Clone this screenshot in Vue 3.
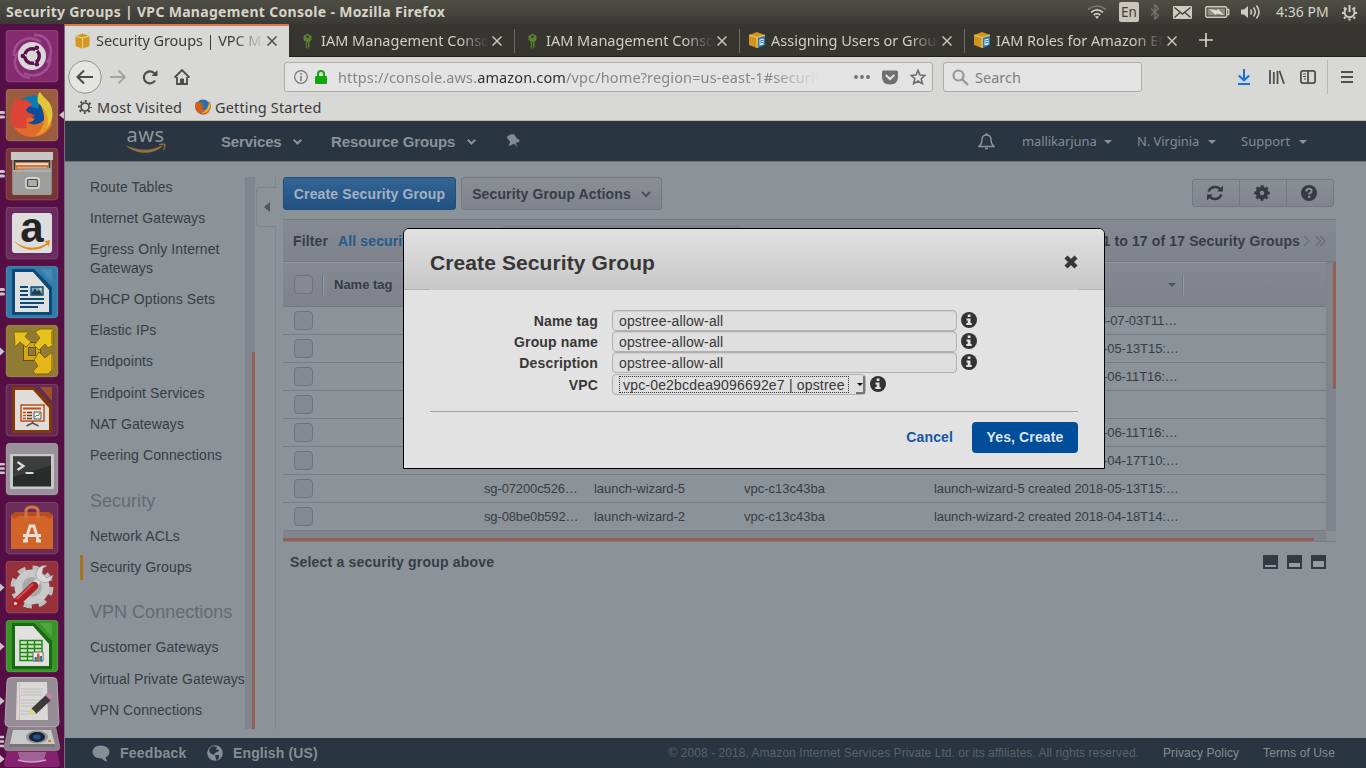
<script setup>
const tabs = [
  { title: 'Security Groups | VPC Management', icon: 'cube', active: true },
  { title: 'IAM Management Console', icon: 'key' },
  { title: 'IAM Management Console', icon: 'key' },
  { title: 'Assigning Users or Groups', icon: 'doc' },
  { title: 'IAM Roles for Amazon EC2', icon: 'doc' },
]
const launcher = [
  { name: 'dash' },
  { name: 'firefox', pips: 2, focus: true },
  { name: 'files', pips: 2 },
  { name: 'amazon' },
  { name: 'writer', pips: 2 },
  { name: 'vmware', pips: 1 },
  { name: 'impress' },
  { name: 'terminal', pips: 3 },
  { name: 'software' },
  { name: 'settings', pips: 1 },
  { name: 'calc', pips: 1 },
]
const nav = [
  { t: 'Route Tables' },
  { t: 'Internet Gateways' },
  { t: 'Egress Only Internet Gateways' },
  { t: 'DHCP Options Sets' },
  { t: 'Elastic IPs' },
  { t: 'Endpoints' },
  { t: 'Endpoint Services' },
  { t: 'NAT Gateways' },
  { t: 'Peering Connections' },
  { t: 'Security', head: true },
  { t: 'Network ACLs' },
  { t: 'Security Groups', current: true },
  { t: 'VPN Connections', head: true },
  { t: 'Customer Gateways' },
  { t: 'Virtual Private Gateways' },
  { t: 'VPN Connections' },
]
const rows = [
  { desc: 'launch_wizard-8 created 2018-07-03T11…' },
  { desc: 'launch-wizard-6 created 2018-05-13T15:…' },
  { desc: 'launch-wizard-7 created 2018-06-11T16:…' },
  {},
  { desc: 'launch-wizard-9 created 2018-06-11T16:…' },
  { desc: 'launch-wizard-1 created 2018-04-17T10:…' },
  { id: 'sg-07200c526…', name: 'launch-wizard-5', vpc: 'vpc-c13c43ba', desc: 'launch-wizard-5 created 2018-05-13T15:…' },
  { id: 'sg-08be0b592…', name: 'launch-wizard-2', vpc: 'vpc-c13c43ba', desc: 'launch-wizard-2 created 2018-04-18T14:…' },
]
const fields = ['Name tag', 'Group name', 'Description']
</script>

<template>
  <div class="screen">
    <header class="topbar">
      <span class="wtitle">Security Groups | VPC Management Console - Mozilla Firefox</span>
      <div class="tray">
        <svg class="t-wifi" width="20" height="16" viewBox="0 0 20 16" fill="none" stroke-linecap="butt">
          <path d="M1 5.5Q10-1.5 19 5.5" stroke="#7b7a70" stroke-width="1.7" /><path d="M4 8.3Q10 3.4 16 8.3" stroke="#d0cdc2" stroke-width="1.7" /><path d="M6.7 11Q10 8.2 13.3 11" stroke="#d0cdc2" stroke-width="1.7" /><path d="M8 12.6Q10 11.4 12 12.6L10 15z" fill="#d0cdc2" />
        </svg>
        <span class="lang">En</span>
        <svg class="t-bt" width="10" height="16" viewBox="0 0 10 16" fill="none" stroke="#77766d" stroke-width="1.3"><path d="M1 4.5l7.5 7L5 15V1l3.5 3.5L1 11.5" /></svg>
        <svg class="t-mail" width="19" height="13" viewBox="0 0 19 13"><rect width="19" height="13" rx="1" fill="#cfccc2" /><path d="M1.5 1.5l8 6.5 8-6.5M1.5 11.5l5.5-5M17.500 11.500l-5.500-5" stroke="#45443d" stroke-width="1.4" fill="none" /></svg>
        <svg class="t-bat" width="25" height="14" viewBox="0 0 25 14"><rect x=".7" y="1.700" width="21" height="10.600" rx="1.500" fill="none" stroke="#cfccc2" stroke-width="1.400" /><path d="M22 4.500h1.800v5H22" fill="none" stroke="#cfccc2" stroke-width="1.300" /><rect x="2.500" y="3.500" width="17.500" height="7" fill="#8f8d83" /><path d="M4 4l8 1.500 1-1.500 6 6-7-1.500-1.500 1.500z" fill="#dedbd0" /></svg>
        <svg class="t-vol" width="20" height="16" viewBox="0 0 20 16" fill="none" stroke="#cfccc2" stroke-width="1.600"><path d="M0 5.500h3L7 2v12L3 10.500H0z" fill="#cfccc2" stroke="none" /><path d="M9.500 5.500q2 2.500 0 5M12.500 3.500q3.500 4.500 0 9M15.500 1.500q5 6.500 0 13" /></svg>
        <span class="clock">4:36 PM</span>
        <svg class="t-cog" width="17" height="17" viewBox="0 0 17 17" fill="none" stroke="#cfccc2"><path d="M5.500 4.300a5 5 0 1 0 6 0" stroke-width="2" /><path d="M8.500 1v7" stroke-width="2" /><path d="M1 9h2M14 9h2M3 3.500l1.500 1.500M14 3.500L12.500 5M3 14.500L4.500 13M14 14.500L12.500 13M8.500 14.500v2" stroke-width="2.200" /></svg>
      </div>
    </header>

    <div class="desk">
      <aside class="launcher">
        <div v-for="l in launcher" :key="l.name" class="slot">
          <svg width="65" height="59" viewBox="0 0 65 59">
            <template v-if="l.pips === 1"><path d="M0 22.500l4.500 4L0 30.500z" fill="#c9c3c8" /></template>
            <template v-if="l.pips === 2"><rect x="-2" y="22" width="7" height="3" rx="1.500" fill="#c9c3c8" /><rect x="-2" y="26.500" width="7" height="3" rx="1.500" fill="#c9c3c8" /></template>
            <template v-if="l.pips === 3"><rect x="-2" y="20" width="7" height="2.600" rx="1.300" fill="#c9c3c8" /><rect x="-2" y="24.200" width="7" height="2.600" rx="1.300" fill="#c9c3c8" /><rect x="-2" y="28.500" width="7" height="2.600" rx="1.300" fill="#c9c3c8" /></template>
            <path v-if="l.focus" d="M64.500 21.500l-5.500 4.500 5.500 4.500z" fill="#c9c3c8" />
            <g transform="translate(6 0)">
              <g v-if="l.name === 'dash'">
                <rect class="tile" width="52" height="52" rx="4" fill="#862b70" />
                <path d="M8 26C7 12 22 3 35 12M44 26c2 14-12 24-26 17M28 5c14-1 22 14 13 28M24 48C10 46 4 32 14 20" stroke="#ad6ba0" stroke-width="2.500" fill="none" opacity=".6" />
                <circle cx="26" cy="26" r="14" fill="#dad7da" /><circle cx="26" cy="26" r="7.300" fill="none" stroke="#5b1049" stroke-width="3.400" stroke-dasharray="13.300 2" stroke-dashoffset="6" />
                <circle cx="16.800" cy="26" r="2.300" fill="#5b1049" /><circle cx="30.800" cy="17.800" r="2.300" fill="#5b1049" /><circle cx="30.800" cy="34.200" r="2.300" fill="#5b1049" />
              </g>
              <g v-else-if="l.name === 'firefox'">
                <rect class="tile" width="52" height="52" rx="4" fill="#9b5d3f" />
                <circle cx="27" cy="24" r="17" fill="#0b4c9c" /><path d="M16 12q8-9 19-4l-3 12-12-4z" fill="#0a7cb4" />
                <path d="M10 8c1 4 3 4 6 3 4-1 6 1 10 4-1 3-5 3-6 6 2 4 6 3 9 6-2 2-5 1-9 4 4 6 14 6 20-1l6 6c-4 8-11 12-20 12C11 48 2 36 5 22c1-5 3-8 5-14z" fill="#dd4438" />
                <path d="M20 30c3-2 6-2 9 0-2 2-4 4-8 3 4 5 13 3 19-4l6 7c-4 8-11 12-20 12-8 0-14-4-18-10 4 1 8 2 13 1z" fill="#dd6b2c" />
                <path d="M34 15c-2-5-2-9 0-12 2 5 8 7 11 14 5 17-4 28-16 30 8-6 13-17 5-32z" fill="#e49b26" />
                <path d="M32 14c-1-5 0-9 2-11 2 5 8 7 11 14 3 9 1 16-4 22 3-11-1-19-9-25z" fill="#e2c73c" />
              </g>
              <g v-else-if="l.name === 'files'">
                <rect class="tile" width="52" height="52" rx="4" fill="#783436" />
                <path d="M6 5h40v41H6z" fill="#8b8b8a" /><path d="M5 4h42v8H5z" fill="#c6c6c4" /><path d="M8 12h36v12H8z" fill="#3a3332" /><path d="M9 14h34v8H9z" fill="#c97a42" /><path d="M10 15h32v2H10z" fill="#e3d6c8" /><path d="M11 19h30v1.500H11z" fill="#e0a27a" /><path d="M7 22h11l3-2h24v27H7z" fill="#9d9d9b" /><path d="M7 23h38" stroke="#bebebc" />
                <rect x="20.500" y="30.500" width="12" height="9" rx="2" fill="none" stroke="#d2d2d0" stroke-width="3" /><rect x="21.500" y="31.500" width="10" height="7" rx="1" fill="#aeaeac" stroke="#4a4a49" stroke-width="1.200" />
              </g>
              <g v-else-if="l.name === 'amazon'">
                <rect class="tile" width="52" height="52" rx="4" fill="#6b2c5f" /><rect x="6" y="6" width="40" height="40" rx="3" fill="#dedede" />
                <text x="26" y="34.500" text-anchor="middle" class="amz">a</text>
                <path d="M8 34c11 9 24 8 33 2l-3-1.500 6-1.500-1 6.500-1.500-2C31 46 16 44 8 34z" fill="#e08c15" />
              </g>
              <g v-else-if="l.name === 'writer'">
                <rect class="tile" width="52" height="52" rx="4" fill="#337ba8" /><path d="M6 3h22l18 18v28H6z" fill="#0a4a78" /><path d="M34 3h12v14z" fill="#4389b0" /><path d="M9 6h18l16 18v22H9z" fill="#e0e0e0" />
                <path d="M14 21h8M14 25h8M14 29h8M14 33h24M14 37h24M14 41h18" stroke="#0b4a74" stroke-width="1.800" /><path d="M25 21h12v8H25z" fill="#6cabcf" stroke="#0b4a74" stroke-width="1.400" /><path d="M26 28.500v-2l3-4 2 3 2-2 3 5z" fill="#263b44" /><circle cx="34.500" cy="23" r="1.300" fill="#efd15a" />
              </g>
              <g v-else-if="l.name === 'vmware'">
                <rect class="tile" width="52" height="52" rx="4" fill="#8f7b33" />
                <path d="M20 20h12v13H20z" fill="none" stroke="#6b5409" stroke-width="6" /><path d="M20 20h12v13H20z" fill="none" stroke="#d2a615" stroke-width="4" />
                <path d="M8 7h15l-4 4.500 6 5.500-5 5-6-5-5 5z" fill="#e6c21f" stroke="#86670a" />
                <path d="M29 7l5-3h13v16l-5 3-3-4-6 6-5-5 6-7z" fill="#e6c21f" stroke="#86670a" />
                <path d="M33 27l6 6 7-6v18l-4 4H29l-2-3 5-5-4-6z" fill="#e6b71b" stroke="#86670a" />
                <path d="M46 6v13M46 30v15" stroke="#b5860e" stroke-width="2" />
              </g>
              <g v-else-if="l.name === 'impress'">
                <rect class="tile" width="52" height="52" rx="4" fill="#662952" /><path d="M6 3h22l18 18v28H6z" fill="#833807" /><path d="M34 3h12v14z" fill="#9b5229" /><path d="M9 6h18l16 18v22H9z" fill="#deddda" />
                <path d="M15 21h23v16H15z" fill="#e6e3de" stroke="#bd5117" stroke-width="1.500" /><path d="M17 24.500h18" stroke="#bd5117" stroke-width="2" /><path d="M17 28.500h3M17 31.500h3M17 34.500h3" stroke="#bd5117" stroke-width="1.600" /><path d="M21 28.500h5M21 31.500h5M21 34.500h5" stroke="#7a330e" stroke-width="1.600" /><path d="M28 28h7v7h-7z" fill="#eee" stroke="#555" /><path d="M29 33l2-2 1 1 2-3" stroke="#3d9a35" fill="none" /><path d="M26.500 37v2l-6 3M26.500 39l6 3" stroke="#555" stroke-width="1.500" fill="none" />
              </g>
              <g v-else-if="l.name === 'terminal'">
                <rect class="tile" width="52" height="52" rx="4" fill="#98919a" /><rect x="4" y="11" width="44" height="35" rx="1.500" fill="#c9c9c9" /><rect x="7" y="13.500" width="38" height="30" fill="#2a2c2c" /><path d="M7 13.500h38v9L7 34z" fill="#3b3d3d" /><path d="M11.500 19l6 4-6 4M19.500 30h8" stroke="#dadada" stroke-width="2.200" fill="none" />
              </g>
              <g v-else-if="l.name === 'software'">
                <rect class="tile" width="52" height="52" rx="4" fill="#6b2c5a" /><path d="M5 13h42v34H5z" fill="#d06429" /><path d="M5 13l4-3h34l4 3-3 4-4-3H12l-4 3z" fill="#b74f1c" /><path d="M20 17V9q0-4 6-4t6 4v8" stroke="#cf7349" stroke-width="3" fill="none" />
                <path d="M19.500 39l4.500-15h4l4.500 15M17 33.500h18M17 39h5M30 39h5" stroke="#e4dfda" stroke-width="2.800" fill="none" />
              </g>
              <g v-else-if="l.name === 'settings'">
                <rect class="tile" width="52" height="52" rx="4" fill="#96303a" /><circle cx="26" cy="26" r="19" fill="none" stroke="#bdbdbd" stroke-width="5" stroke-dasharray="8 6.920" /><circle cx="26" cy="26" r="13" fill="none" stroke="#c9c9c9" stroke-width="9" /><circle cx="26" cy="26" r="10" fill="#a9a9a9" />
                <path d="M37 15L25 27" stroke="#d8d8d8" stroke-width="6" /><path d="M41 5a8.500 8.500 0 1 0 6 9l-6 3-5-4 1-6z" fill="#d8d8d8" stroke="#8a8a8a" stroke-width=".6" /><path d="M28 25L10 42" stroke="#a91f26" stroke-width="8.500" stroke-linecap="round" /><path d="M27 23L11 38" stroke="#d05058" stroke-width="2" /><circle cx="9.500" cy="42.500" r="1.600" fill="#e8dede" />
              </g>
              <g v-else>
                <rect class="tile" width="52" height="52" rx="4" fill="#3a9429" /><path d="M6 3h22l18 18v28H6z" fill="#176a10" /><path d="M34 3h12v14z" fill="#4da73c" /><path d="M9 6h18l16 18v22H9z" fill="#e0e1df" />
                <path d="M14 20.500h22v20H14zM14 24.500h22M14 28.500h22M14 32.500h22M14 36.500h22M21.500 20v20M28.500 20v20" stroke="#228615" stroke-width="1.400" fill="#cfe6c8" /><path d="M27 32h10v9H27z" fill="#eee" stroke="#666" /><path d="M28.500 37h2.500v4h-2.500z" fill="#2b80b8" /><path d="M31 33.500h2.500V41H31z" fill="#cf6420" /><path d="M33.500 36H36v5h-2.500z" fill="#2b80b8" />
              </g>
            </g>
          </svg>
        </div>
        <svg class="stack" width="65" height="95" viewBox="0 0 65 95">
          <path d="M7 75h50l3 13q0 3-4 3H8q-4 0-4-3z" fill="#85216f" /><path d="M18 76h28l-2 8q-12 3-24 0z" fill="#a26298" /><path d="M18 84q13 4 28 0" stroke="#caa5c5" fill="none" stroke-width="1.500" />
          <path d="M0 79l4.500 4L0 87z" fill="#c9c3c8" />
          <path d="M8 50h48l4 20q1 5-4 5H8q-5 0-4-5z" fill="#8c8289" /><path d="M13 54h38l4 14H10z" fill="#c8c8c8" /><path d="M10 68h44v3H10z" fill="#77777a" /><ellipse cx="37" cy="61" rx="11" ry="6.500" fill="#8e9396" /><ellipse cx="37" cy="61" rx="8" ry="5" fill="#172330" /><ellipse cx="37" cy="61" rx="4" ry="2.500" fill="#1f4f90" /><path d="M48 64h3v2h-3z" fill="#cf8a1a" />
          <path d="M0 61h4M0 65.500h4M0 70h4" stroke="#c9c3c8" stroke-width="2.400" />
          <path d="M11 1.500h42q4 0 4 4l2 41q0 4-4 4H9q-4 0-4-4L7 5.500q0-4 4-4z" fill="#968c95" stroke="#b0a7af" />
          <path d="M17 6h30l1 38H16z" fill="#d9d8d6" /><path d="M21 13h22M21 16h20M21 19h22M21 24h20M21 27h22M21 30h16M21 35h20M21 38h12" stroke="#b9b8b8" stroke-width=".8" /><path d="M19.500 6v38" stroke="#d8a9a9" stroke-width=".7" />
          <path d="M31 33l15-14 5 5-15 14z" fill="#3b3b3d" /><path d="M45 19l2-2q2-1 4 0t1 4l-2 3z" fill="#bf84ad" /><path d="M31 32l5 5-7 2z" fill="#e0d37c" />
          <path d="M0 21l4.500 4L0 29z" fill="#c9c3c8" />
        </svg>
      </aside>

      <section class="browser">
        <div class="tabs">
          <div v-for="(t, i) in tabs" :key="i" class="tab" :class="{ active: t.active }">
            <svg v-if="t.icon === 'cube'" class="fav" width="16" height="16" viewBox="0 0 16 16"><path d="M1 3l7-2.500L15 3v10l-7 2.800L1 13z" fill="#d3981f" /><path d="M1 3l7 2 7-2M8 5v11" stroke="#eed9a8" stroke-width=".9" fill="none" /></svg>
            <svg v-else-if="t.icon === 'key'" class="fav" width="16" height="16" viewBox="0 0 16 16"><path d="M4 3l4-2.500L12 3v4l-2 1.500V14l-2 1.700L6 14v-1l1-.7L6 11v-1l1-1-3-2z" fill="#5d8032" /><path d="M8 9v6" stroke="#2d4418" /><circle cx="8" cy="3.800" r="1.300" fill="#35342f" /></svg>
            <svg v-else class="fav" width="17" height="17" viewBox="0 0 17 17"><path d="M0 3l8-3 8 3v9l-8 4-8-3z" fill="#d3941b" /><path d="M0 3l8 2.500L16 3M8 5.500V16" stroke="#f0d9a2" stroke-width=".8" fill="none" /><path d="M9 6l7-2v9l-7 3z" fill="#2a7cae" /><path d="M10.500 7.500l4-1v6l-4 1z" fill="#e8eef1" /><path d="M11 9l3-.6M11 11l3-.6" stroke="#2a7cae" /></svg>
            <span class="ttl">{{ t.title }}</span>
            <svg class="x" width="10" height="10" viewBox="0 0 10 10"><path d="M.5.5l9 9M9.500.5l-9 9" stroke-width="1.500" /></svg>
          </div>
          <svg class="plus" width="14" height="14" viewBox="0 0 14 14"><path d="M7 0v14M0 7h14" stroke="#d2d0c8" stroke-width="1.700" /></svg>
        </div>

        <div class="toolbar">
          <svg class="b-back" width="34" height="34" viewBox="0 0 34 34" fill="none"><circle cx="17" cy="17" r="16.300" fill="#e4e4e3" stroke="#949392" /><path d="M25 17H10M16 10.500L9.500 17l6.500 6.500" stroke="#4b4b4a" stroke-width="2" /></svg>
          <svg class="b-fwd" width="16" height="16" viewBox="0 0 16 16" fill="none" stroke="#a3a3a2" stroke-width="1.900"><path d="M0 8h14.500M8.500 1.500L15 8l-6.500 6.500" /></svg>
          <svg class="b-rel" width="16" height="16" viewBox="0 0 16 16" fill="none" stroke="#4b4b4a" stroke-width="2.100"><path d="M13 11.500A6 6 0 1 1 12.500 4.500" /><path d="M15.500 1v6h-6z" fill="#4b4b4a" stroke="none" /></svg>
          <svg class="b-home" width="16" height="16" viewBox="0 0 16 16" fill="none" stroke="#4b4b4a" stroke-width="1.800"><path d="M.5 8.500L8 1l7.500 7.500M3 8v7h10V8" /><path d="M6.500 15v-5h3v5" fill="#4b4b4a" stroke-width="1" /></svg>
          <div class="url">
            <svg class="u-i" width="14" height="14" viewBox="0 0 14 14"><circle cx="7" cy="7" r="6.300" fill="none" stroke="#777" stroke-width="1.200" /><path d="M7 6v5M7 3v1.700" stroke="#777" stroke-width="1.500" /></svg>
            <svg class="u-l" width="12" height="14" viewBox="0 0 12 14"><path d="M3 7V4a3 3 0 0 1 6 0v3" stroke="#12a60c" stroke-width="2" fill="none" /><rect y="6" width="12" height="8" rx="1" fill="#12a60c" /></svg>
            <span class="u-t">https://console.aws.<b>amazon.com</b>/vpc/home?region=us-east-1#security</span>
            <svg class="u-d" width="16" height="4" viewBox="0 0 16 4" fill="#6f6f6e"><circle cx="2" cy="2" r="1.900" /><circle cx="8" cy="2" r="1.900" /><circle cx="14" cy="2" r="1.900" /></svg>
            <svg class="u-p" width="16" height="15" viewBox="0 0 16 15"><path d="M1.500.5h13q1.500 0 1.500 1.500v5q0 7.500-8 7.500T0 7V2Q0 .5 1.500.5z" fill="#6f6f6e" /><path d="M4.300 5.500L8 9l3.700-3.500" stroke="#e3e3e3" stroke-width="2" fill="none" stroke-linecap="round" /></svg>
            <svg class="u-s" width="16" height="16" viewBox="0 0 16 16"><path d="M8 1.300l2 4.700 5 .4-3.800 3.300 1.200 5L8 12l-4.400 2.700 1.200-5L1 6.400 6 6z" fill="none" stroke="#6f6f6e" stroke-width="1.600" /></svg>
          </div>
          <div class="search">
            <svg width="17" height="17" viewBox="0 0 17 17" fill="none" stroke="#969695" stroke-width="2.200"><circle cx="6.500" cy="6.500" r="5" /><path d="M10 10l6 6" /></svg>
            <span>Search</span>
          </div>
          <svg class="b-dl" width="12" height="16" viewBox="0 0 12 16" fill="none" stroke="#1471d6" stroke-width="2"><path d="M6 0v11M.8 6.500L6 11.300l5.200-4.800M0 15h12" /></svg>
          <svg class="b-lib" width="16" height="14" viewBox="0 0 16 14" fill="none" stroke="#4f4f4e" stroke-width="1.800"><path d="M1 0v14M4.800 2v12M8.500 1v13M10.500 .8l4.500 13" /></svg>
          <svg class="b-side" width="16" height="14" viewBox="0 0 16 14" fill="none" stroke="#4f4f4e" stroke-width="1.800"><rect x=".9" y=".9" width="14.200" height="12.200" rx="2" /><path d="M8 1v12" /><path d="M3 4h3M3 6.500h3M4 9h2" stroke-width="1" /></svg>
          <i class="vsep"></i>
          <svg class="b-menu" width="12" height="12" viewBox="0 0 12 12" stroke="#4f4f4e" stroke-width="1.900"><path d="M0 1h12M0 6h12M0 11h12" /></svg>
        </div>

        <div class="bookmarks">
          <svg width="14" height="14" viewBox="0 0 14 14" fill="none" stroke="#4b4b4a"><circle cx="7" cy="7" r="4" stroke-width="1.700" /><circle cx="7" cy="7" r="5.900" stroke-width="2.200" stroke-dasharray="1.900 2.730" stroke-dashoffset=".9" /></svg>
          <span class="bm1">Most Visited</span>
          <svg width="16" height="16" viewBox="0 0 16 16"><circle cx="8" cy="8" r="7.500" fill="#2f6eab" /><path d="M1 3q-3 8 3 11 7 4 11-3 2-6-1-9 1 6-2 8-4 2-6-1l3-1-3-3 2-1-5-1z" fill="#d05f1b" /><path d="M14 3q3 7-2 10-3 2-6 1 7-2 8-11z" fill="#e3ae31" /></svg>
          <span class="bm2">Getting Started</span>
        </div>

        <nav class="aws">
          <svg class="logo" width="42" height="27" viewBox="0 0 42 27"><text x="1.500" y="13.500" class="awst" textLength="37.500">aws</text><path d="M0 17c11 10 27 10 37 2l-.8-1.300Q20 26 0 17z" fill="#94703f" /><path d="M34 16.600q5-1.500 6-.3t-1.500 6q2-5 .3-5.200T34 16.600z" fill="#94703f" stroke="#94703f" stroke-width=".8" /></svg>
          <span class="n1">Services</span>
          <svg class="chev" width="9" height="6" viewBox="0 0 9 6"><path d="M.8.8l3.700 3.700L8.200.8" /></svg>
          <span class="n2">Resource Groups</span>
          <svg class="chev" width="9" height="6" viewBox="0 0 9 6"><path d="M.8.8l3.700 3.700L8.200.8" /></svg>
          <svg class="pin" width="13" height="14" viewBox="0 0 13 14"><path d="M5 0l2 .2L9.500 4l3 2-.5 2-3.300.7 1.800 4.800L7 9.800 2.500 12 2 11l1-3.500L0 4l.5-2z" fill="#848b93" /></svg>
          <svg class="bell" width="17" height="17" viewBox="0 0 17 17" fill="none" stroke="#8d949a" stroke-width="1.400"><path d="M1 13.500q3-2.500 3-7 0-4.500 4.500-4.500T13 6.500q0 4.500 3 7z" /><path d="M8.500 0v2M7 15.500h3" /></svg>
          <span class="u1">mallikarjuna</span><i class="dn"></i>
          <span class="u2">N. Virginia</span><i class="dn"></i>
          <span class="u3">Support</span><i class="dn"></i>
        </nav>

        <main class="page">
          <div class="side">
            <div class="list">
              <div v-for="(n, i) in nav" :key="i" :class="[n.head ? 'shead' : 'sitem', { cur: n.current }]">{{ n.t }}</div>
            </div>
            <div class="sbar"><i></i></div>
          </div>
          <div class="gutter">
            <div class="fold"><i></i></div>
          </div>
          <div class="content">
            <div class="actions">
              <div class="btn primary">Create Security Group</div>
              <div class="btn plain">Security Group Actions<svg class="chev dark" width="10" height="7" viewBox="0 0 10 7"><path d="M1 1l4 4 4-4" /></svg></div>
              <div class="group">
                <span><svg width="18" height="16" viewBox="0 0 18 16" fill="none" stroke="#353a41" stroke-width="2.400"><path d="M2.500 6.500Q4.500 2 9 2q3.500 0 5.500 2.500M15.500 9.500Q13.500 14 9 14q-3.500 0-5.500-2.500" /><path d="M17 .5v6h-6zM1 15.500v-6h6z" fill="#353a41" stroke="none" /></svg></span>
                <span><svg width="16" height="16" viewBox="0 0 16 16" fill="none" stroke="#353a41"><circle cx="8" cy="8" r="4.200" stroke-width="4" /><circle cx="8" cy="8" r="6.600" stroke-width="2.400" stroke-dasharray="2.900 2.280" stroke-dashoffset="1.450" /></svg></span>
                <span><svg width="16" height="16" viewBox="0 0 16 16"><circle cx="8" cy="8" r="8" fill="#353a41" /><path d="M5.300 6.300Q5.500 3.700 8 3.700t2.600 2.200Q10.600 7.200 9.300 8 8.200 8.600 8.200 9.600" stroke="#878b92" stroke-width="2.100" fill="none" /><rect x="7" y="10.800" width="2.300" height="2.200" fill="#878b92" /></svg></span>
              </div>
            </div>

            <div class="filter">
              <b>Filter</b><b class="all">All security groups</b>
              <i class="fsearch"></i>
              <b class="count">1 to 17 of 17 Security Groups</b>
              <svg width="23" height="12" viewBox="0 0 23 12" fill="none" stroke="#6b727b" stroke-width="1.600"><path d="M1 1l5 5-5 5M12.500 1l5 5-5 5M17 1l5 5-5 5" /></svg>
            </div>

            <div class="tablebox">
              <div class="table">
                <div class="thead">
                  <i class="cb"></i><i class="csep"></i><b>Name tag</b><i class="tri"></i><i class="csep last"></i>
                </div>
                <div v-for="(r, i) in rows" :key="i" class="tr">
                  <i class="cb"></i><span class="c-id">{{ r.id }}</span><span class="c-nm">{{ r.name }}</span><span class="c-vpc">{{ r.vpc }}</span><span class="c-d">{{ r.desc }}</span>
                </div>
              </div>
              <div class="vbar"><i></i></div>
            </div>
            <div class="hbar"><i></i></div>
            <div class="select">
              <b>Select a security group above</b>
              <div class="panes">
                <svg v-for="h in [2, 4, 6]" :key="h" width="15" height="14" viewBox="0 0 15 14"><rect width="15" height="14" fill="#353a42" /><rect x="2" :y="12 - h" width="11" :height="h" fill="#949ba1" /></svg>
              </div>
            </div>
          </div>
        </main>

        <footer class="foot">
          <svg width="18" height="17" viewBox="0 0 18 17"><path d="M9 .5c5 0 8.500 3 8.500 6.500 0 2.500-1.500 4.500-4 5.500q.5 2.500 2.500 4-4 0-6-3C4 13.500.5 10.700.5 7S4 .5 9 .5z" fill="#868e95" /></svg>
          <b class="f1">Feedback</b>
          <svg width="16" height="16" viewBox="0 0 16 16"><circle cx="8" cy="8" r="7.800" fill="#868e95" /><path d="M6 1l4 1-1 3 2-1 1 2-4 2-1 2-4-2-1-3 1-2zM8 10l4 0 0 3-2.500 2.500-1-3z" fill="#293541" /></svg>
          <b class="f2">English (US)</b>
          <span class="copy">© 2008 - 2018, Amazon Internet Services Private Ltd. or its affiliates. All rights reserved.</span>
          <span class="pp">Privacy Policy</span><span class="tou">Terms of Use</span>
        </footer>
      </section>
    </div>

    <div class="modal">
      <div class="mhead">
        <h1>Create Security Group</h1>
        <svg width="14" height="14" viewBox="0 0 14 14"><path d="M2 2l10 10M12 2L2 12" stroke="#373737" stroke-width="4.400" /></svg>
      </div>
      <div class="mbody">
        <div v-for="f in fields" :key="f" class="frow">
          <label>{{ f }}</label><div class="inp">opstree-allow-all</div>
          <svg class="info" width="16" height="16" viewBox="0 0 16 16"><circle cx="8" cy="8" r="8" fill="#333" /><path d="M6.700 2.500h2.800V5H6.700zM5.500 6.500h4V11h1.200v2H5.300v-2h1.400V8.500H5.500z" fill="#e2e2e2" /></svg>
        </div>
        <div class="frow vrow">
          <label>VPC</label>
          <div class="sel"><span>vpc-0e2bcdea9096692e7 | opstree</span><i><em></em></i></div>
          <svg class="info" width="16" height="16" viewBox="0 0 16 16"><circle cx="8" cy="8" r="8" fill="#333" /><path d="M6.700 2.500h2.800V5H6.700zM5.500 6.500h4V11h1.200v2H5.300v-2h1.400V8.500H5.500z" fill="#e2e2e2" /></svg>
        </div>
      </div>
      <div class="mfoot"><b class="cancel">Cancel</b><b class="yes">Yes, Create</b></div>
    </div>
  </div>
</template>

<style>
body { margin: 0; overflow: hidden; }
</style>

<style scoped>
* { box-sizing: border-box; }
i, em { font-style: normal; display: block; }
svg { flex: none; display: block; }
.screen { position: relative; width: 1366px; height: 768px; overflow: hidden; font: 14px "Liberation Sans", Arial, sans-serif; color: #383d44; white-space: nowrap; }
.topbar { height: 24px; display: flex; align-items: center; justify-content: space-between; background: linear-gradient(#4f4e46, #3a3934); color: #d6d3c8; font-family: "Noto Sans", sans-serif; padding: 0 8px 0 6px; }
.wtitle { font-weight: 700; font-size: 14px; letter-spacing: .31px; margin-top: -2px; }
.tray { display: flex; align-items: center; }
.lang { width: 20px; height: 20px; border-radius: 2px; background: #c9c6bb; color: #3f3e38; font-size: 13.500px; line-height: 20px; text-align: center; margin: 0 11px 0 12px; }
.t-mail { margin-left: 13px; }
.t-bat { margin-left: 13px; }
.t-vol { margin-left: 11px; }
.clock { font-size: 14px; width: 53px; margin: 0 12px 0 15px; position: relative; top: -1px; }
.desk { display: flex; height: 744px; }
.launcher { width: 65px; height: 744px; background: #560f45; border-right: 1px solid #7c6b7d; padding-top: 6px; overflow: hidden; flex: none; }
.slot { height: 59px; }
.tile { stroke: #fff; stroke-opacity: .15; }
.amz { font: bold 42px "Liberation Sans", sans-serif; fill: #242424; }
.stack { margin-top: -3px; }
.browser { flex: 1; min-width: 0; display: flex; flex-direction: column; }
.tabs { height: 33px; background: #363530; display: flex; align-items: center; border-bottom: 1px solid #1f1e1c; font: 14.500px "Noto Sans", sans-serif; color: #d0cec5; }
.tab { width: 225px; height: 32px; display: flex; align-items: center; padding: 1px 13px 0 9px; position: relative; }
.tab.active { background: #d8d8d7; color: #3c3c3b; border-top: 2px solid #de7450; padding: 0 12px 1px 9px; height: 33px; margin-bottom: -1px; width: 224px; margin-right: 1px; }
.active .ttl { letter-spacing: -.08px; }
.tab:not(.active):not(:nth-child(2))::before { content: ""; position: absolute; left: -1px; top: 5px; height: 24px; width: 1px; background: #6b6a64; }
.fav { width: 17px; }
.ttl { width: 168px; margin-left: 5px; overflow: hidden; position: relative; top: -1px; -webkit-mask-image: linear-gradient(90deg, #000 82%, transparent); mask-image: linear-gradient(90deg, #000 82%, transparent); }
.x { margin-left: auto; stroke: #c6c4bb; }
.active .x { stroke: #4b4b4a; }
.plus { margin-left: 9px; }
.toolbar { height: 40px; background: #d8d8d7; display: flex; align-items: center; padding-left: 3px; }
.b-fwd { margin-left: 8px; } .b-rel { margin-left: 16px; } .b-home { margin-left: 16px; }
.url { width: 649px; height: 30px; margin-left: 94px; border: 1px solid #adaca8; border-radius: 3px; background: #e3e3e3; display: flex; align-items: center; padding-left: 9px; font: 14.500px "Noto Sans", sans-serif; color: #868686; }
.url b { font-weight: 400; color: #2f2f2f; }
.u-l { margin-left: 7px; }
.u-t { margin-left: 11px; width: 480px; overflow: hidden; letter-spacing: .13px; -webkit-mask-image: linear-gradient(90deg, #000 90%, transparent); mask-image: linear-gradient(90deg, #000 90%, transparent); }
.u-d { margin-left: 36px; } .u-p { margin-left: 12px; } .u-s { margin-left: 12px; }
.search { width: 199px; height: 30px; margin-left: 10px; border: 1px solid #adaca8; border-radius: 3px; background: #e3e3e3; display: flex; align-items: center; padding-left: 8px; gap: 6px; font: 14.500px "Noto Sans", sans-serif; color: #7e7e7e; }
.b-dl { margin-left: 96px; } .b-lib { margin-left: 19px; } .b-side { margin-left: 15px; }
.vsep { width: 1px; height: 34px; background: #b7b7b6; margin: 0 13px 0 11px; }
.bookmarks { height: 24px; background: #d8d8d7; border-bottom: 1px solid #b9b5ab; display: flex; align-items: center; padding: 0 0 3px 13px; font: 14.500px "Noto Sans", sans-serif; color: #3a3a39; letter-spacing: .15px; }
.bm1 { width: 87px; margin: 0 11px 0 5px; } .bm2 { margin-left: 4px; }
.aws { height: 40px; background: #293541; display: flex; align-items: center; padding-left: 60px; color: #8b929a; font-weight: 700; font-size: 15px; box-shadow: 0 1px 0 #6b737b; position: relative; }
.logo { margin-top: 1px; }
.awst { font: 20px "Noto Sans", sans-serif; fill: #8f969b; }
.n1 { margin-left: 54px; width: 60px; letter-spacing: -.15px; }
.n2 { margin-left: 29px; width: 124px; letter-spacing: -.1px; }
.chev { fill: none; stroke: #8b929a; stroke-width: 2; margin-left: 12px; margin-top: 2px; }
.pin { margin-left: 31px; }
.bell { margin-left: 458px; }
.u1, .u2, .u3 { font: 13px "Noto Sans", sans-serif; color: #858c93; }
.u1 { margin-left: 27px; width: 74px; letter-spacing: -.1px; } .u2, .u3 { margin-left: 25px; }
.u2 { width: 63px; letter-spacing: -.08px; } .u3 { width: 50px; }
.dn { border: 4px solid transparent; border-top-color: #8b929a; border-bottom: 0; margin-left: 8px; margin-top: 1px; }
.page { height: 577px; background: #8b9298; display: flex; padding-top: 16px; }
.side { width: 190px; height: 552px; display: flex; }
.list { width: 180px; padding-left: 15px; letter-spacing: .1px; }
.sitem { line-height: 19px; margin-bottom: 12.200px; margin-left: 10px; white-space: normal; width: 157px; position: relative; top: .5px; }
.sitem:nth-child(15) { letter-spacing: .08px; white-space: nowrap; }
.shead { font-size: 18px; line-height: 49px; height: 49.400px; margin-left: 10px; color: #646b72; letter-spacing: .02px; }
.cur::before { content: ""; position: absolute; left: -10px; top: -3px; width: 3px; height: 25px; background: #a67220; }
.sbar { width: 10px; background: #80848d; }
.sbar i { width: 3px; margin: 175px 0 0 7px; height: 377px; background: #936152; border-radius: 1px 1px 0 0; }
.gutter { width: 21px; height: 552px; border-right: 1px solid #80868e; padding-top: 10px; }
.fold { width: 20px; height: 40px; margin-left: 1px; border: 1px solid #7d838b; border-right: 0; border-radius: 4px 0 0 4px; background: #8b9298; padding: 14px 0 0 7px; }
.fold i { width: 0; height: 0; border: 5.500px solid transparent; border-right: 6px solid #50575b; border-left: 0; }
.content { margin-left: 7px; width: 1053px; }
.actions { display: flex; height: 42px; letter-spacing: .13px; font-weight: 700; }
.btn { height: 33px; line-height: 32px; border: 1px solid; border-radius: 3px; text-align: center; }
.primary { width: 173px; background: linear-gradient(#336494, #205181); border-color: #204f77; color: #a3b1c1; }
.plain { width: 201px; margin-left: 5px; background: linear-gradient(#8a8e95, #7f838b); border-color: #727780; display: flex; justify-content: center; align-items: center; }
.chev.dark { stroke: #4b5158; margin-left: 10px; margin-top: 1px; }
.group { display: flex; margin: 2px 2px 0 auto; height: 28px; border: 1px solid #727780; border-radius: 3px; background: linear-gradient(#8a8e95, #81858d); }
.group span { width: 47px; display: flex; align-items: center; justify-content: center; padding-right: 2px; }
.group span + span { border-left: 1px solid #727780; }
.group span:first-child { width: 46px; }
.filter { height: 43px; border-top: 1px solid #747982; border-bottom: 1px solid #747982; background: linear-gradient(#858992, #7f838b); display: flex; align-items: center; padding: 0 10px; letter-spacing: .13px; }
.all { margin-left: 10px; color: #235a8b; }
.fsearch { width: 250px; height: 30px; border: 1px solid #757b84; border-radius: 10px; margin-left: 30px; }
.count { margin-left: auto; margin-right: 3px; }
.tablebox { display: flex; height: 269px; }
.table { width: 1043px; height: 269px; overflow: hidden; }
.thead { height: 45px; border-top: 1px solid #90969d; border-bottom: 1px solid #737881; background: linear-gradient(#858991, #7e828a); display: flex; align-items: center; padding-left: 11px; font-size: 13px; }
.cb { width: 19px; height: 19px; border: 1px solid #6d737c; border-radius: 4px; background: #858a92; }
.csep { width: 2px; height: 20px; border-left: 1px solid #6f757e; border-right: 1px solid #949aa1; margin: 0 10px 0 9px; }
.tri { border: 4px solid transparent; border-top-color: #50575d; border-bottom: 0; margin-left: 775px; }
.last { margin-left: 6px; }
.tr { height: 28px; border-bottom: 1px solid #777d86; display: flex; align-items: center; padding-left: 11px; font-size: 13px; }
.c-id { margin-left: 171px; width: 110px; letter-spacing: -.13px; } .c-nm { width: 150px; letter-spacing: -.05px; } .c-vpc { width: 190px; } .c-d { letter-spacing: -.08px; }
.vbar { width: 10px; background: #80848d; }
.vbar i { width: 3px; height: 127px; margin-left: 7px; background: #936152; border-radius: 1px; }
.hbar { height: 11px; padding-top: 7px; background: linear-gradient(90deg, #80848d 1043px, #8a8f96 1043px); border-bottom: 1px solid #797e87; }
.hbar i { width: 1031px; height: 3px; background: #936152; }
.select { display: flex; justify-content: space-between; padding: 12px 10px 0 7px; letter-spacing: .2px; }
.panes { display: flex; gap: 9px; padding-top: 1px; }
.foot { height: 30px; background: #293541; display: flex; align-items: center; padding-left: 27px; color: #858d94; }
.f1 { margin-left: 10px; width: 87px; letter-spacing: .25px; } .f2 { margin-left: 10px; letter-spacing: .13px; }
.copy { font-size: 12px; color: #59636c; margin-left: auto; letter-spacing: .055px; }
.pp, .tou { font-size: 12px; margin-left: 24px; letter-spacing: .1px; } .tou { margin-right: 31px; }
.modal { position: absolute; left: 403px; top: 228px; width: 702px; height: 241px; border: 1px solid #000; border-radius: 6px 6px 0 0; background: #e2e2e2; color: #373737; overflow: hidden; }
.mhead { height: 61px; background: linear-gradient(#b1b1b1, #b1b1b1) 0 60px / 25px 1px no-repeat, linear-gradient(#b1b1b1, #b1b1b1) 100% 60px / 25px 1px no-repeat, linear-gradient(#e1e1e1, #c7c7c7); display: flex; align-items: center; justify-content: space-between; padding: 4px 26px 0 26px; }
h1 { margin: 0; font-size: 21px; letter-spacing: .1px; line-height: 24px; padding-top: 3px; }
.mbody { margin: 0 26px; height: 122px; padding-top: 20px; border-bottom: 1px solid #a2a2a2; }
.frow { display: flex; height: 21px; align-items: center; }
.frow label { width: 168px; text-align: right; font-weight: 700; letter-spacing: .15px; }
.inp { width: 345px; height: 21px; margin-left: 14px; border: 1px solid #b0b0b0; border-radius: 4px; background: #dfdfdf; box-shadow: inset 0 1px 1px #cfcfcf; padding-left: 6px; line-height: 20px; letter-spacing: .14px; }
.info { margin-left: 4px; margin-top: -2px; }
.vrow { margin-top: 1px; }
.sel { width: 254px; height: 21px; margin-left: 14px; border: 1px solid #b0b0b0; border-radius: 4px; background: #dfdfdf; display: flex; align-items: center; justify-content: space-between; padding-left: 6px; }
.sel span { width: 230px; height: 17px; border: 1px dotted #333; line-height: 16px; padding-left: 3px; letter-spacing: .18px; }
.sel i { width: 9px; height: 18px; border-right: 2px solid #777; border-bottom: 2px solid #777; padding: 7px 0 0 1px; }
.sel em { border: 3px solid transparent; border-top-color: #111; border-bottom: 0; width: 6px; }
.mfoot { display: flex; justify-content: flex-end; align-items: center; padding: 10px 26px 0 0; letter-spacing: .13px; }
.cancel { color: #1457a6; margin-right: 19px; line-height: 30px; height: 31px; }
.yes { width: 106px; height: 31px; line-height: 30px; border-radius: 4px; background: #004d99; color: #dfe5ec; text-align: center; }
</style>
